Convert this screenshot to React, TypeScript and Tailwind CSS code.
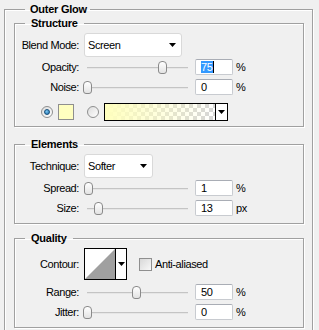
import React from "react";

function Arrow() {
	return (
		<svg width="7" height="4" viewBox="0 0 7 4" className="block">
			<path d="M0 0H7L3.5 4Z" fill="#000" />
		</svg>
	);
}

function Label({ children }: { children: React.ReactNode }) {
	return <div className="w-[65px] shrink-0 text-right pr-[1px]">{children}</div>;
}

function Select({ value, width }: { value: string; width: string }) {
	return (
		<div
			className={`ml-[4px] h-[24px] ${width} flex items-center justify-between bg-white border border-[#d9d9d9] rounded-[3px] pl-[3px] pr-[5px]`}
		>
			<span>{value}</span>
			<Arrow />
		</div>
	);
}

function Slider({ pos }: { pos: number }) {
	return (
		<div className="relative ml-[3px] w-[109px] h-[16px] shrink-0">
			<div className="absolute left-[4px] top-[8px] w-[101px] h-[2px] bg-[#c4c4c4] border-b border-[#e6e6e6]" />
			<div
				className="absolute top-[2px] w-[9px] h-[13px] rounded-t-[4px] rounded-b-[3px] border border-[#8a8a8a] bg-[linear-gradient(to_bottom,#ffffff,#e3e3e3)]"
				style={{ left: pos }}
			/>
		</div>
	);
}

function NumInput({ value, selected }: { value: string; selected?: boolean }) {
	return (
		<div className="ml-[3px] w-[38px] h-[16px] shrink-0 bg-white border border-[#c8cbd0] border-t-[#a9adb5] rounded-[2px] flex items-center pl-[5px]">
			{selected ? (
				<span className="bg-[#3399ff] text-white leading-[12px] pr-[1px] border-r border-black">{value}</span>
			) : (
				<span className="leading-[12px]">{value}</span>
			)}
		</div>
	);
}

function SliderRow({
	label,
	pos,
	value,
	unit,
	selected,
	className,
}: {
	label: string;
	pos: number;
	value: string;
	unit: string;
	selected?: boolean;
	className?: string;
}) {
	return (
		<div className={`flex items-center h-[16px] ${className ?? ""}`}>
			<Label>{label}</Label>
			<Slider pos={pos} />
			<NumInput value={value} selected={selected} />
			<span className="ml-[3px]">{unit}</span>
		</div>
	);
}

function Radio({ on }: { on?: boolean }) {
	return (
		<div className="w-[12px] h-[12px] rounded-full border border-[#8e8f8f] bg-[linear-gradient(135deg,#dcdcdc,#ffffff)] flex items-center justify-center shrink-0">
			{on && (
				<div className="w-[6px] h-[6px] rounded-full bg-[radial-gradient(circle_at_40%_35%,#7cc7f2,#1a6aa8)] border border-[#16507c]" />
			)}
		</div>
	);
}

const group =
	"border border-[#a0a0a0] shadow-[inset_1px_1px_0_#fff,1px_1px_0_#fff] min-w-0";

export default function App() {
	return (
		<div className="w-[319px] h-[330px] overflow-hidden bg-[#f0f0f0] pt-[3px] pl-[4px] text-[11px] leading-[13px] tracking-[-0.4px] text-black font-['Liberation_Sans',Arial,sans-serif]">
			<fieldset className={`w-[309px] ${group} pl-[9px] pr-[8px] pb-[20px]`}>
				<legend className="ml-[11px] pl-[5px] pr-[3px] font-bold leading-[12px] tracking-[-0.25px]">Outer Glow</legend>

				<fieldset className={`mt-[2px] ${group} pt-[4px] pb-[5px]`}>
					<legend className="ml-[10px] px-[6px] font-bold leading-[12px] tracking-[-0.25px]">Structure</legend>
					<div className="flex items-center h-[24px]">
						<Label>Blend Mode:</Label>
						<Select value="Screen" width="w-[98px]" />
					</div>
					<SliderRow className="mt-[2px]" label="Opacity:" pos={75} value="75" unit="%" selected />
					<SliderRow className="mt-[4px]" label="Noise:" pos={0} value="0" unit="%" />
					<div className="flex items-center h-[18px] mt-[8px] pl-[26px]">
						<Radio on />
						<div className="ml-[5px] w-[16px] h-[16px] border border-[#8f8f8f] bg-[#ffffc0]" />
						<div className="ml-[13px]">
							<Radio />
						</div>
						<div className="ml-[5px] w-[124px] h-[18px] border border-black flex">
							<div className="flex-1 bg-[linear-gradient(to_right,#ffffbe,rgba(255,255,190,0)),repeating-conic-gradient(#d6d6d6_0_25%,#ffffff_0_50%)] [background-size:100%_100%,8px_8px]" />
							<div className="w-[12px] border-l border-black bg-white flex items-center justify-center">
								<Arrow />
							</div>
						</div>
					</div>
				</fieldset>

				<fieldset className={`mt-[11px] ${group} pt-[4px] pb-[7px]`}>
					<legend className="ml-[10px] px-[6px] font-bold leading-[12px] tracking-[-0.25px]">Elements</legend>
					<div className="flex items-center h-[24px]">
						<Label>Technique:</Label>
						<Select value="Softer" width="w-[69px]" />
					</div>
					<SliderRow className="mt-[2px]" label="Spread:" pos={1} value="1" unit="%" />
					<SliderRow className="mt-[4px]" label="Size:" pos={11} value="13" unit="px" />
				</fieldset>

				<fieldset className={`mt-[8px] ${group} pt-[4px] pb-[7px]`}>
					<legend className="ml-[10px] px-[6px] font-bold leading-[12px] tracking-[-0.25px]">Quality</legend>
					<div className="flex items-center h-[32px]">
						<Label>Contour:</Label>
						<div className="ml-[4px] w-[43px] h-[32px] border border-black bg-white flex shrink-0">
							<svg width="30" height="30" viewBox="0 0 30 30" className="block">
								<path d="M0 30L30 0V30Z" fill="#a0a0a0" />
							</svg>
							<div className="flex-1 border-l border-black flex items-center justify-center">
								<Arrow />
							</div>
						</div>
						<div className="ml-[12px] w-[13px] h-[13px] border border-[#8f8f8f] bg-[linear-gradient(135deg,#d8d8d8,#f8f8f8)] shrink-0" />
						<span className="ml-[3px]">Anti-aliased</span>
					</div>
					<SliderRow className="mt-[4px]" label="Range:" pos={49} value="50" unit="%" />
					<SliderRow className="mt-[4px]" label="Jitter:" pos={0} value="0" unit="%" />
				</fieldset>
			</fieldset>
		</div>
	);
}
